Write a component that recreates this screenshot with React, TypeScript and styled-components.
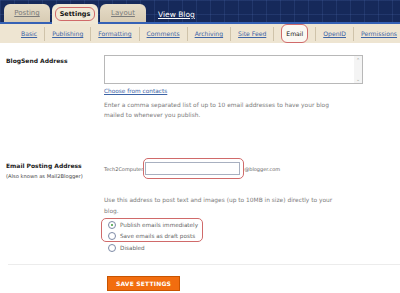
import styled, { createGlobalStyle } from "styled-components";

const Global = createGlobalStyle`
    body{
        margin: 0;
        background: #fff;
        font-family: "DejaVu Sans", Verdana, sans-serif;
    }
`

const mainTabs = ["Posting", "Settings", "Layout"]
const subTabs = ["Basic", "Publishing", "Formatting", "Comments", "Archiving", "Site Feed", "Email", "OpenID", "Permissions"]

export default function App() {
    return (
        <Page>
            <Global />
            <Header>
                {mainTabs.map(t => (
                    <Tab key={t} active={t === "Settings"}>
                        {t === "Settings" ? <Marked>{t}</Marked> : <span>{t}</span>}
                    </Tab>
                ))}
                <ViewBlog>View Blog</ViewBlog>
            </Header>
            <SubNav>
                {subTabs.map(t => (
                    <SubItem key={t} active={t === "Email"}>
                        {t === "Email" ? <EmailMark>{t}</EmailMark> : <SubLink>{t}</SubLink>}
                    </SubItem>
                ))}
            </SubNav>
            <Content>
                <Row top={12}>
                    <Label>BlogSend Address</Label>
                    <Field>
                        <TextBox>
                            <ScrollBar>
                                <span>⌃</span>
                                <span>⌄</span>
                            </ScrollBar>
                        </TextBox>
                        <Contacts>Choose from contacts</Contacts>
                        <Help>Enter a comma separated list of up to 10 email addresses to have your blog<br />mailed to whenever you publish.</Help>
                    </Field>
                </Row>
                <Row top={40}>
                    <Label>
                        Email Posting Address
                        <Sub>(Also known as Mail2Blogger)</Sub>
                    </Label>
                    <Field>
                        <AddressLine>
                            <Small>Tech2Computer</Small>
                            <InputRing><Input /></InputRing>
                            <Small>@blogger.com</Small>
                        </AddressLine>
                        <Help2>Use this address to post text and images (up to 10MB in size) directly to your<br />blog.</Help2>
                        <RadioGroup>
                            <Radio checked label="Publish emails immediately" />
                            <Radio label="Save emails as draft posts" />
                        </RadioGroup>
                        <RadioAlone>
                            <Radio label="Disabled" />
                        </RadioAlone>
                    </Field>
                </Row>
                <Divider />
                <ButtonRow>
                    <SaveButton>SAVE SETTINGS</SaveButton>
                </ButtonRow>
            </Content>
        </Page>
    )
}

function Radio({checked, label} : {checked? : boolean, label : string}) {
    return (
        <RadioLine>
            <Circle>{checked && <Dot />}</Circle>
            <span>{label}</span>
        </RadioLine>
    )
}

const Page = styled.div`
    width: 400px;
    height: 293px;
    overflow: hidden;
`
const Header = styled.div`
    height: 22px;
    background-color: #16295a;
    background-image:
        linear-gradient(rgba(90,120,190,0.18) 1px, transparent 1px),
        linear-gradient(90deg, rgba(90,120,190,0.18) 1px, transparent 1px);
    background-size: 14px 14px;
    border-bottom: 2px solid #3561b5;
    display: flex;
    align-items: flex-end;
    padding-left: 4px;
    gap: 2px;
`
const Tab = styled.div<{active : boolean}>`
    width: 46px;
    height: ${({active}) => active ? "20px" : "18px"};
    margin-bottom: ${({active}) => active ? "-2px" : "0"};
    border-radius: 6px 6px 0 0;
    background: ${({active}) => active ? "#f0e8d6" : "linear-gradient(#e6dcc8, #d8ccb4)"};
    display: flex;
    align-items: center;
    justify-content: center;
    font-size: 7px;
    color: #7a7a7a;
    & > span{
        text-decoration: underline;
    }
`
const Marked = styled.div`
    border: 1px solid #d06a6a;
    border-radius: 6px;
    padding: 2px 4px;
    color: #111;
    font-weight: bold;
    font-size: 6.5px;
`
const ViewBlog = styled.div`
    color: #fff;
    font-size: 7.5px;
    text-decoration: underline;
    margin-left: 10px;
    margin-bottom: 3px;
`
const SubNav = styled.div`
    height: 19px;
    background: #eee5d2;
    display: flex;
    align-items: center;
    padding-left: 14px;
`
const SubItem = styled.div<{active : boolean}>`
    padding: 0 7px;
    border-right: 1px solid #cfc3aa;
    height: 14px;
    display: flex;
    align-items: center;
    font-size: 6.1px;
    white-space: nowrap;
    flex-shrink: 0;
    &:last-child{
        border-right: none;
    }
`
const SubLink = styled.span`
    color: #3d64a6;
    text-decoration: underline;
`
const EmailMark = styled.span`
    color: #111;
    background: #fbf8f2;
    border: 1px solid #d06a6a;
    border-radius: 6px;
    padding: 5px 4px;
`
const Content = styled.div`
    padding-left: 6px;
`
const Row = styled.div<{top : number}>`
    display: grid;
    grid-template-columns: 98px 1fr;
    margin-top: ${({top}) => top}px;
`
const Label = styled.div`
    font-size: 6px;
    font-weight: bold;
    color: #222;
    padding-top: 2px;
`
const Sub = styled.div`
    font-weight: normal;
    font-size: 5.2px;
    color: #444;
    margin-top: 4px;
`
const Field = styled.div`
    display: flex;
    flex-direction: column;
    align-items: flex-start;
`
const TextBox = styled.div`
    width: 257px;
    height: 27px;
    border: 1px solid #b8b8b8;
    display: flex;
    justify-content: flex-end;
`
const ScrollBar = styled.div`
    width: 8px;
    display: flex;
    flex-direction: column;
    justify-content: space-between;
    font-size: 5px;
    color: #999;
    background: #f4f4f4;
    padding: 1px 0;
    align-items: center;
`
const Contacts = styled.div`
    color: #3d64a6;
    font-size: 5.8px;
    text-decoration: underline;
    margin-top: 4px;
`
const Help = styled.div`
    color: #7b7b7b;
    font-size: 5.9px;
    line-height: 10px;
    margin-top: 6px;
`
const AddressLine = styled.div`
    display: flex;
    align-items: center;
    margin-top: -2px;
`
const Small = styled.span`
    font-size: 5px;
    color: #666;
`
const InputRing = styled.div`
    border: 1px solid #d06a6a;
    border-radius: 5px;
    padding: 3px 3px 3px 1px;
`
const Input = styled.div`
    width: 93px;
    height: 11px;
    border: 1px solid #a8b0c0;
    background: #fff;
`
const Help2 = styled.div`
    color: #7b7b7b;
    font-size: 5.9px;
    line-height: 11px;
    margin-top: 16px;
`
const RadioGroup = styled.div`
    border: 1px solid #d06a6a;
    border-radius: 5px;
    padding: 0 4px 0 6px;
    margin-top: 1px;
    margin-left: -3px;
`
const RadioAlone = styled.div`
    padding-left: 4px;
`
const RadioLine = styled.div`
    display: flex;
    align-items: center;
    gap: 4px;
    height: 11px;
    font-size: 5.7px;
    color: #666;
`
const Circle = styled.div`
    width: 6px;
    height: 6px;
    border-radius: 50%;
    border: 1px solid #7d8aa6;
    background: #fff;
    display: flex;
    align-items: center;
    justify-content: center;
`
const Dot = styled.div`
    width: 2px;
    height: 2px;
    border-radius: 50%;
    background: #3b9b3b;
`
const Divider = styled.div`
    height: 1px;
    background: #ececec;
    margin: 11px 0 0 2px;
`
const ButtonRow = styled.div`
    padding-left: 101px;
    margin-top: 11px;
`
const SaveButton = styled.div`
    width: 73px;
    height: 15px;
    background: #f26d0f;
    border: 1px solid #c85400;
    box-sizing: border-box;
    color: #fff;
    font-weight: bold;
    font-size: 6px;
    display: flex;
    align-items: center;
    justify-content: center;
    letter-spacing: 0.2px;
`
